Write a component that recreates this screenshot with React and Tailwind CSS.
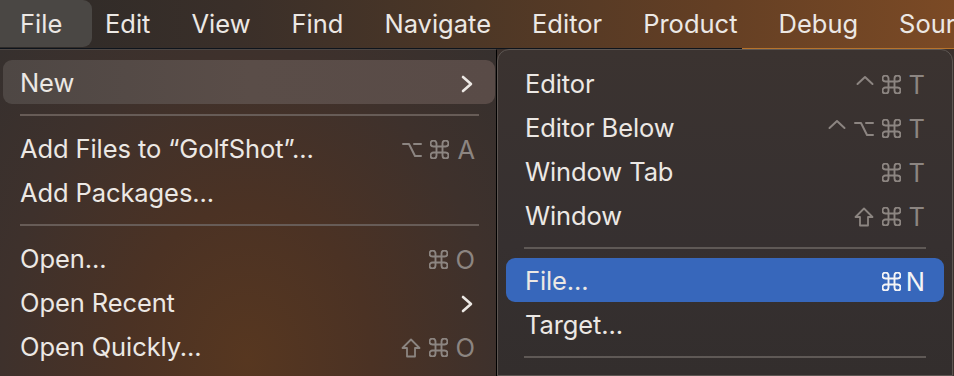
import React from "react";

const Chevron = () => (
  <svg width="14" height="18" viewBox="0 0 14 18" className="shrink-0">
    <polyline points="3,2 11,9 3,16" fill="none" stroke="#ece8e4" strokeWidth="2.6" strokeLinecap="round" strokeLinejoin="round" />
  </svg>
);

const Cmd = () => (
  <svg width="19" height="19" viewBox="2.5 2.5 19 19" className="shrink-0">
    <path d="M15 6v12a3 3 0 1 0 3-3H6a3 3 0 1 0 3 3V6a3 3 0 1 0-3 3h12a3 3 0 1 0-3-3" fill="none" stroke="currentColor" strokeWidth="1.9" strokeLinecap="round" strokeLinejoin="round" />
  </svg>
);

const Opt = () => (
  <svg width="20" height="16" viewBox="0 0 20 16" className="shrink-0">
    <path d="M1 2h6l6 12h6M12 2h7" fill="none" stroke="currentColor" strokeWidth="2" strokeLinecap="round" strokeLinejoin="round" />
  </svg>
);

const Ctrl = () => (
  <svg width="18" height="19" viewBox="0 0 18 19" className="shrink-0">
    <polyline points="1.5,9 9,2 16.5,9" fill="none" stroke="currentColor" strokeWidth="2" strokeLinecap="round" strokeLinejoin="round" />
  </svg>
);

const Shift = () => (
  <svg width="20" height="20" viewBox="0 0 20 20" className="shrink-0">
    <path d="M10 1.5 L18.5 10 H14 V18.5 H6 V10 H1.5 Z" fill="none" stroke="currentColor" strokeWidth="1.8" strokeLinejoin="round" />
  </svg>
);

function Shortcut({ keys, active }) {
  return (
    <div className={"flex items-center " + (active ? "gap-[5px] text-[#f4f4f6]" : "gap-[8px] text-[#8c8581]")}>
      {keys.map((k, i) => {
        if (k === "⌘") return <Cmd key={i} />;
        if (k === "⌥") return <Opt key={i} />;
        if (k === "⌃") return <Ctrl key={i} />;
        if (k === "⇧") return <Shift key={i} />;
        return (
          <span key={i} className="text-[25.5px] leading-none">
            {k}
          </span>
        );
      })}
    </div>
  );
}

function Row({ label, keys, chevron, highlight, blue, pl, pr }) {
  let cls = "h-[44px] pt-[3px] flex items-center justify-between rounded-[9px] ";
  if (highlight) cls += "bg-[linear-gradient(90deg,#4e4744_0%,#5a4d48_50%,#594b47_100%)] ";
  if (blue) cls += "bg-[#3767bb] ";
  return (
    <div className={cls + pl + " " + pr}>
      <span className="text-[25.5px] text-[#ece8e4] tracking-[-0.1px] whitespace-nowrap">{label}</span>
      {chevron ? <Chevron /> : keys ? <Shortcut keys={keys} active={blue} /> : null}
    </div>
  );
}

export default function App() {
  const barItems = ["Edit", "View", "Find", "Navigate", "Editor", "Product", "Debug", "Source Control"];
  return (
    <div className="w-[954px] h-[376px] overflow-hidden flex flex-col font-['Inter','DejaVu_Sans',sans-serif] bg-[#3a302c]">
      {/* menu bar */}
      <div className="h-[48px] shrink-0 flex items-center bg-[linear-gradient(90deg,#2d2a28_0%,#3a2f29_25%,#4d3726_50%,#643f24_75%,#7b4a25_100%)] text-[25.5px] text-[#ece8e4] whitespace-nowrap">
        <div className="h-[47px] self-start w-[92px] shrink-0 pl-[20px] pt-[1px] flex items-center bg-[#4a4744] rounded-r-[9px]">File</div>
        <div className="flex items-center gap-[41px] ml-[13px] pt-[1px]">
          {barItems.map((t) => (
            <span key={t}>{t}</span>
          ))}
        </div>
      </div>
      <div className="h-[1px] shrink-0 bg-[linear-gradient(90deg,#0e141c_0%,#0e141c_77.8%,#b7732c_77.8%,#b7732c_100%)]" />

      <div className="flex flex-1 min-h-0">
        {/* left menu */}
        <div className="w-[497px] shrink-0 border-r border-black border-t border-t-[#4d4643] bg-[radial-gradient(ellipse_at_50%_95%,#573720_0%,#4b3224_35%,#3e312c_70%,#36302e_100%)] pt-[10px] pl-[3px] pr-[1px]">
          <Row label="New" chevron highlight pl="pl-[17px]" pr="pr-[21px]" />
          <div className="h-[22px] flex items-center pl-[17px] pr-[16px]">
            <div className="h-[2px] w-full bg-[#675c57]" />
          </div>
          <Row label="Add Files to “GolfShot”..." keys={["⌥", "⌘", "A"]} pl="pl-[17px]" pr="pr-[20px]" />
          <Row label="Add Packages..." pl="pl-[17px]" pr="pr-[20px]" />
          <div className="h-[22px] flex items-center pl-[17px] pr-[16px]">
            <div className="h-[2px] w-full bg-[#675c57]" />
          </div>
          <Row label="Open..." keys={["⌘", "O"]} pl="pl-[17px]" pr="pr-[20px]" />
          <Row label="Open Recent" chevron pl="pl-[17px]" pr="pr-[21px]" />
          <Row label="Open Quickly..." keys={["⇧", "⌘", "O"]} pl="pl-[17px]" pr="pr-[20px]" />
        </div>

        {/* submenu */}
        <div className="w-[456px] shrink-0 border border-[#5d5652] rounded-t-[12px] bg-[linear-gradient(180deg,#3b3330_0%,#363030_60%,#332e2d_100%)] pt-[11px] px-[8px]">
          <Row label="Editor" keys={["⌃", "⌘", "T"]} pl="pl-[19px]" pr="pr-[19px]" />
          <Row label="Editor Below" keys={["⌃", "⌥", "⌘", "T"]} pl="pl-[19px]" pr="pr-[19px]" />
          <Row label="Window Tab" keys={["⌘", "T"]} pl="pl-[19px]" pr="pr-[19px]" />
          <Row label="Window" keys={["⇧", "⌘", "T"]} pl="pl-[19px]" pr="pr-[19px]" />
          <div className="h-[21px] flex items-center px-[18px]">
            <div className="h-[2px] w-full bg-[#5f5956]" />
          </div>
          <Row label="File..." keys={["⌘", "N"]} blue pl="pl-[19px]" pr="pr-[19px]" />
          <Row label="Target..." pl="pl-[19px]" pr="pr-[19px]" />
          <div className="h-[22px] flex items-center px-[18px]">
            <div className="h-[2px] w-full bg-[#5f5956]" />
          </div>
        </div>
      </div>
    </div>
  );
}
